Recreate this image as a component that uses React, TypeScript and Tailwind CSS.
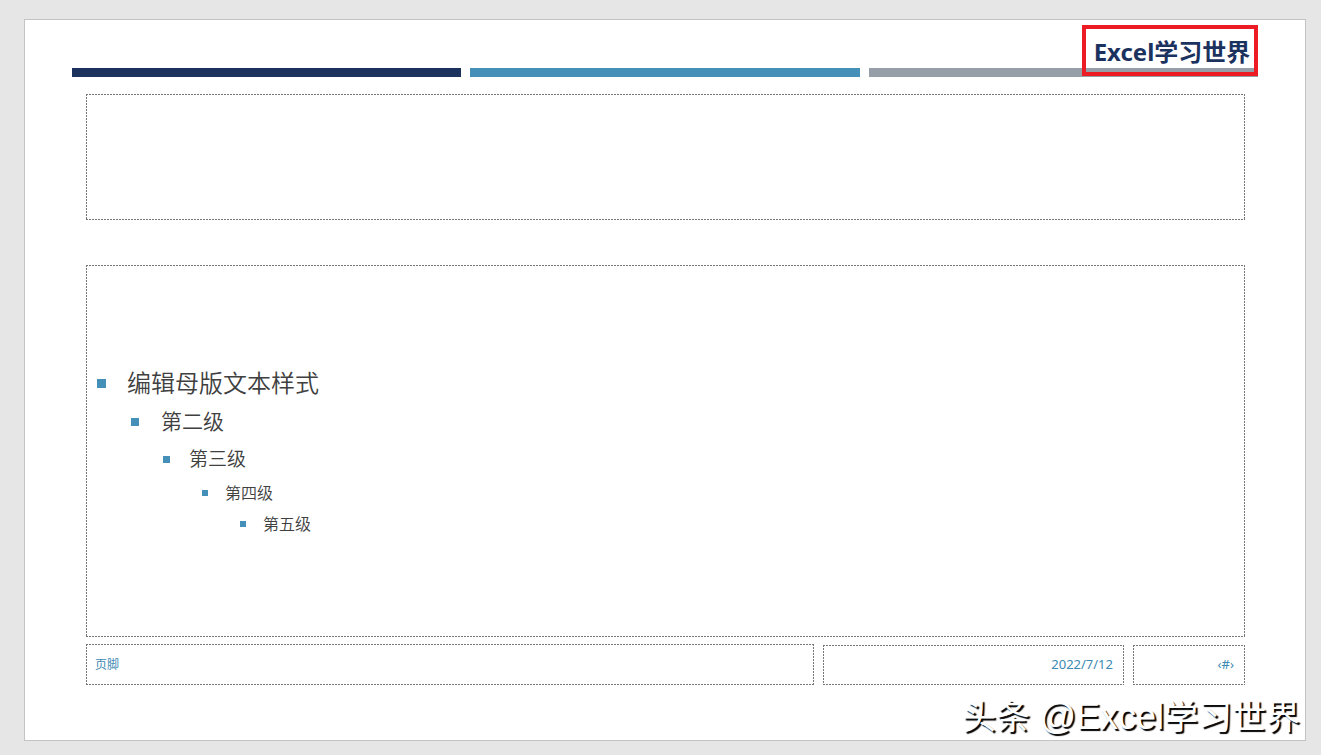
import type { ReactNode } from "react";

const levels = [
  { text: "编辑母版文本样式", row: "pl-[11px] h-10 text-2xl", bullet: "size-[9px]", gap: "w-[30px]" },
  { text: "第二级", row: "pl-[45px] h-[38px] text-[21px]", bullet: "size-2", gap: "w-[30px]" },
  { text: "第三级", row: "pl-[77px] h-9 text-[19px]", bullet: "size-[7px]", gap: "w-[26px]" },
  { text: "第四级", row: "pl-[116px] h-[31px] text-base", bullet: "size-[6px]", gap: "w-[23px]" },
  { text: "第五级", row: "pl-[154px] h-[31px] text-base", bullet: "size-[6px]", gap: "w-[23px]" },
];

const dash =
  "bg-[repeating-linear-gradient(90deg,#777_0_2px,transparent_2px_3px),repeating-linear-gradient(90deg,#777_0_2px,transparent_2px_3px),repeating-linear-gradient(180deg,#777_0_2px,transparent_2px_3px),repeating-linear-gradient(180deg,#777_0_2px,transparent_2px_3px)] bg-no-repeat [background-size:100%_1px,100%_1px,1px_100%,1px_100%] [background-position:0_0,0_100%,0_0,100%_0]";

function Placeholder({ className, children }: { className: string; children?: ReactNode }) {
  return <div className={`${dash} ${className}`}>{children}</div>;
}

export default function App() {
  return (
    <div className="flex min-h-screen bg-[#e6e6e6] pt-[19px] pr-[15px] pb-[14px] pl-6 font-['Noto_Sans','Noto_Sans_CJK_SC',sans-serif]">
      <main className="relative flex flex-1 flex-col border border-[#c3c3c3] bg-white px-[47px] pt-12 pb-[55px]">
        <div className="grid grid-cols-3 gap-[9px]">
          <div className="h-[9px] bg-[#1b325f]" />
          <div className="h-[9px] bg-[#4590b8]" />
          <div className="h-[9px] bg-[#969fa7]" />
        </div>

        <div className="absolute top-[5px] right-[47px] flex h-[51px] w-44 items-center justify-center border-4 border-[#ed1c24] pt-0.5 pl-1 text-2xl font-bold whitespace-nowrap text-[#1b325f]">
          Excel学习世界
        </div>

        <div className="mt-[17px] mr-[13px] ml-[14px] flex flex-1 flex-col">
          <Placeholder className="h-[126px]" />
          <Placeholder className="mt-[45px] flex flex-1 flex-col justify-center">
            <ul className="font-[350] text-[#404040]">
              {levels.map((level) => (
                <li key={level.text} className={`flex items-center ${level.row}`}>
                  <span className={level.gap}>
                    <span className={`block bg-[#4590b8] ${level.bullet}`} />
                  </span>
                  {level.text}
                </li>
              ))}
            </ul>
          </Placeholder>
          <footer className="mt-[7px] grid grid-cols-[728fr_301fr_112fr] items-end gap-[9px] text-[#3d8ab4]">
            <Placeholder className="flex h-[41px] items-center px-[9px] text-xs">页脚</Placeholder>
            <Placeholder className="flex h-10 items-center justify-end px-[11px] text-[13px]">2022/7/12</Placeholder>
            <Placeholder className="flex h-10 items-center justify-end px-[11px] text-[13px]">‹#›</Placeholder>
          </footer>
        </div>

        <div className="absolute right-[5px] bottom-0 font-['Liberation_Sans','Noto_Sans_CJK_SC',sans-serif] text-[34px] leading-[46px] whitespace-nowrap text-white [text-shadow:2px_2px_1px_#000]">
          头条 <span className="text-4xl leading-[46px]">@Excel</span>学习世界
        </div>
      </main>
    </div>
  );
}
